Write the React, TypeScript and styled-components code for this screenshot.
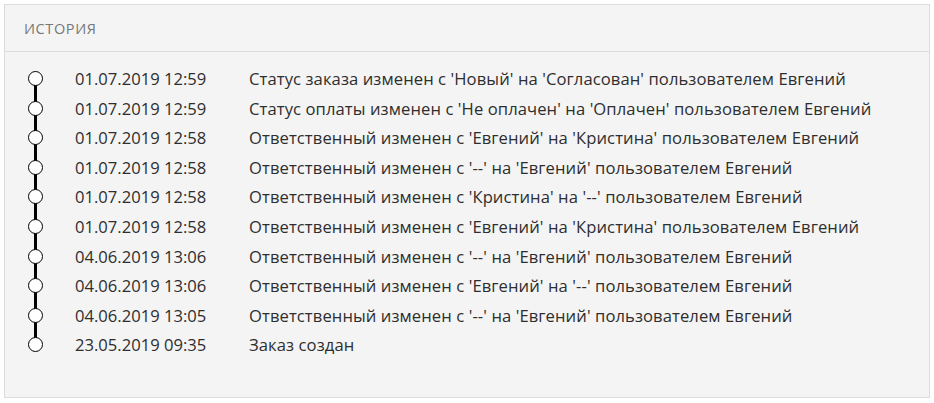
import React from "react";
import styled, { createGlobalStyle } from "styled-components";

const Global = createGlobalStyle`
  html, body { margin: 0; padding: 0; background: #ffffff; }
  body { font-family: "Open Sans", "Liberation Sans", sans-serif; }
`;

const Page = styled.div`
  padding: 4px 4px 5px 4px;
  width: 934px;
  box-sizing: border-box;
`;

const Panel = styled.section`
  background: #f4f4f4;
  border: 1px solid #dcdcdc;
  height: 394px;
  box-sizing: border-box;
  display: flex;
  flex-direction: column;
`;

const Header = styled.div`
  height: 47px;
  box-sizing: border-box;
  border-bottom: 1px solid #dcdcdc;
  display: flex;
  align-items: center;
  padding-left: 19px;
  font-size: 14.5px;
  color: #777777;
  letter-spacing: 0.6px;
  text-transform: uppercase;
`;

const List = styled.ul`
  list-style: none;
  margin: 0;
  padding: 12px 0 0 0;
`;

const Item = styled.li<{ $first: boolean; $last: boolean }>`
  position: relative;
  display: flex;
  align-items: center;
  height: 29.56px;
  font-size: 16.6px;
  color: #2e2e2e;

  &::before {
    content: "";
    position: absolute;
    left: 29px;
    width: 3px;
    background: #000;
    top: ${(p) => (p.$first ? "50%" : "0")};
    bottom: ${(p) => (p.$last ? "50%" : "0")};
  }
`;

const Dot = styled.span`
  position: relative;
  z-index: 1;
  width: 15px;
  height: 15px;
  box-sizing: border-box;
  border: 1.5px solid #000;
  border-radius: 50%;
  background: #fff;
  margin-left: 23px;
  margin-right: 32px;
  flex: none;
`;

const DateCell = styled.span`
  width: 174px;
  flex: none;
`;

const Message = styled.span`
  white-space: nowrap;
  letter-spacing: 0.09px;
`;

const rows: [string, string][] = [
  ["01.07.2019 12:59", "Статус заказа изменен с 'Новый' на 'Согласован' пользователем Евгений"],
  ["01.07.2019 12:59", "Статус оплаты изменен с 'Не оплачен' на 'Оплачен' пользователем Евгений"],
  ["01.07.2019 12:58", "Ответственный изменен с 'Евгений' на 'Кристина' пользователем Евгений"],
  ["01.07.2019 12:58", "Ответственный изменен с '--' на 'Евгений' пользователем Евгений"],
  ["01.07.2019 12:58", "Ответственный изменен с 'Кристина' на '--' пользователем Евгений"],
  ["01.07.2019 12:58", "Ответственный изменен с 'Евгений' на 'Кристина' пользователем Евгений"],
  ["04.06.2019 13:06", "Ответственный изменен с '--' на 'Евгений' пользователем Евгений"],
  ["04.06.2019 13:06", "Ответственный изменен с 'Евгений' на '--' пользователем Евгений"],
  ["04.06.2019 13:05", "Ответственный изменен с '--' на 'Евгений' пользователем Евгений"],
  ["23.05.2019 09:35", "Заказ создан"],
];

export default function App() {
  return (
    <Page>
      <Global />
      <Panel>
        <Header>История</Header>
        <List>
          {rows.map(([d, m], i) => (
            <Item key={i} $first={i === 0} $last={i === rows.length - 1}>
              <Dot />
              <DateCell>{d}</DateCell>
              <Message>{m}</Message>
            </Item>
          ))}
        </List>
      </Panel>
    </Page>
  );
}
